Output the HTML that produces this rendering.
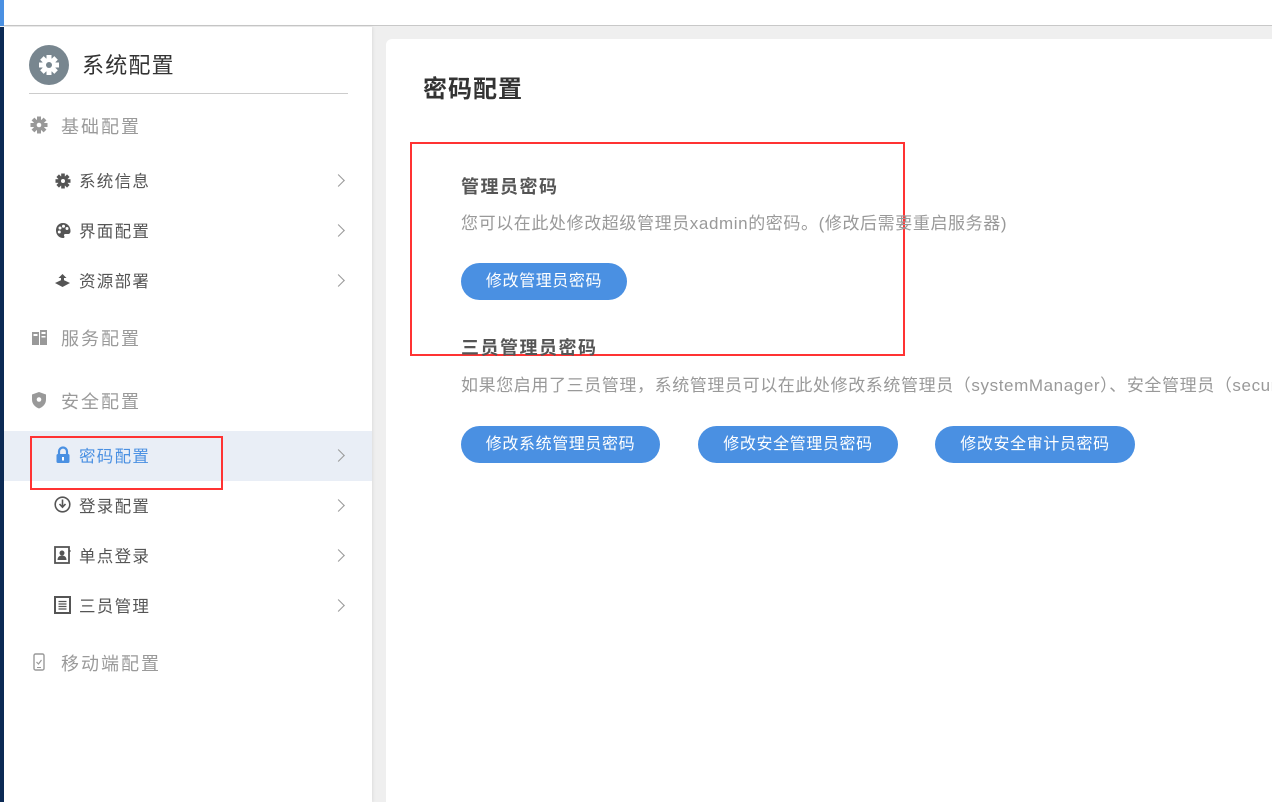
<!DOCTYPE html>
<html><head><meta charset="utf-8"><style>
*{margin:0;padding:0;box-sizing:border-box}
html,body{width:1272px;height:802px;overflow:hidden}
body{background:#efefef;font-family:"Liberation Sans","Noto Sans CJK SC",sans-serif;position:relative}
.a{position:absolute;white-space:nowrap}
.top{left:0;top:0;width:1272px;height:26px;background:#fff;border-bottom:1px solid #c8c8c8}
.strip{left:0;top:27px;width:4px;height:775px;background:#0c2a55}
.side{left:4px;top:27px;width:368px;height:775px;background:#fff;box-shadow:1px 0 3px rgba(0,0,0,.08)}
.main{left:386px;top:39px;width:886px;height:763px;background:#fff;border-radius:6px 0 0 0}
.g{font-size:18px;letter-spacing:2px;color:#9a9a9a;left:61px;line-height:24px}
.s{font-size:16.5px;letter-spacing:1.3px;color:#555;left:79px;line-height:22px}
.chev{left:334px;width:9px;height:9px;border-top:1.3px solid #999;border-right:1.3px solid #999;transform:rotate(45deg)}
.btn{height:37px;border-radius:19px;background:#4a90e2;color:#fff;font-size:16px;letter-spacing:.6px;line-height:37px;text-align:center}
.h{font-size:18px;letter-spacing:1.5px;font-weight:bold;color:#555;left:461px}
.d{font-size:17px;letter-spacing:.6px;color:#999;left:461px}
.red{border:2px solid #f33}
</style></head><body>
<div class="a top"></div>
<div class="a" style="left:0;top:0;width:4px;height:26px;background:#4a90e2"></div>
<div class="a strip"></div>
<div class="a side"></div>
<div class="a main"></div>

<svg class="a" style="left:29px;top:45px" width="40" height="40" viewBox="0 0 40 40"><circle cx="20" cy="20" r="20" fill="#78868f"/><g fill="#fff" transform="translate(20 20)"><circle r="7"/><g><rect x="-2.5" y="-10" width="5" height="20"/><rect x="-2.5" y="-10" width="5" height="20" transform="rotate(45)"/><rect x="-2.5" y="-10" width="5" height="20" transform="rotate(90)"/><rect x="-2.5" y="-10" width="5" height="20" transform="rotate(135)"/></g><circle r="3" fill="#78868f"/></g></svg>
<div class="a" style="left:82px;top:52px;font-size:22px;letter-spacing:1.2px;color:#333;line-height:28px">系统配置</div>
<div class="a" style="left:29px;top:93px;width:319px;height:1px;background:#ccc"></div>

<svg class="a" style="left:30px;top:116px" width="18" height="18" viewBox="-9 -9 18 18"><g fill="#999"><circle r="5.5"/><rect x="-2" y="-8.5" width="4" height="17"/><rect x="-2" y="-8.5" width="4" height="17" transform="rotate(45)"/><rect x="-2" y="-8.5" width="4" height="17" transform="rotate(90)"/><rect x="-2" y="-8.5" width="4" height="17" transform="rotate(135)"/></g><circle r="2.3" fill="#fff"/></svg>
<div class="a g" style="top:115px">基础配置</div>

<svg class="a" style="left:55px;top:173px" width="16" height="16" viewBox="-8 -8 16 16"><g fill="#555"><circle r="5"/><rect x="-1.8" y="-7.5" width="3.6" height="15"/><rect x="-1.8" y="-7.5" width="3.6" height="15" transform="rotate(45)"/><rect x="-1.8" y="-7.5" width="3.6" height="15" transform="rotate(90)"/><rect x="-1.8" y="-7.5" width="3.6" height="15" transform="rotate(135)"/></g><circle r="2" fill="#fff"/></svg>
<div class="a s" style="top:171px">系统信息</div><div class="a chev" style="top:176px"></div>

<svg class="a" style="left:55px;top:222px" width="16" height="17" viewBox="0 0 16 17"><path d="M8 1C3.5 1 1 4.5 1 8.5 1 13 4.5 16 8 16c1.5 0 1.8-1 1.2-2-.6-1 0-2 1.3-2H13c1.5 0 2.5-1 2.5-3C15.5 4.5 12.5 1 8 1z" fill="#555"/><circle cx="5" cy="6" r="1.5" fill="#fff"/><circle cx="8.5" cy="4.3" r="1.5" fill="#fff"/><circle cx="4.3" cy="10" r="1.5" fill="#fff"/><circle cx="12" cy="6.5" r="1.5" fill="#fff"/></svg>
<div class="a s" style="top:221px">界面配置</div><div class="a chev" style="top:226px"></div>

<svg class="a" style="left:54px;top:273px" width="17" height="16" viewBox="0 0 17 16"><path d="M8.5 1 4.5 5h2.5v4h3V5h2.5z" fill="#555"/><path d="M1 10l7.5-3.5L16 10l-7.5 4z" fill="#555"/></svg>
<div class="a s" style="top:271px">资源部署</div><div class="a chev" style="top:276px"></div>

<svg class="a" style="left:31px;top:329px" width="17" height="17" viewBox="0 0 17 17"><rect x="1" y="3" width="7" height="13" fill="#999"/><rect x="9" y="1" width="7" height="15" fill="#999"/><rect x="2.5" y="5" width="4" height="2" fill="#fff"/><rect x="10.5" y="3" width="4" height="2" fill="#fff"/><rect x="10.5" y="7" width="4" height="1.5" fill="#fff"/></svg>
<div class="a g" style="top:327px">服务配置</div>

<svg class="a" style="left:31px;top:391px" width="16" height="18" viewBox="0 0 16 18"><path d="M8 1 1 3.5v5C1 13 4 16 8 17.5c4-1.5 7-4.5 7-9v-5z" fill="#999"/><circle cx="8" cy="8.5" r="2.3" fill="#fff"/></svg>
<div class="a g" style="top:390px">安全配置</div>

<div class="a" style="left:4px;top:431px;width:368px;height:50px;background:#e9eef6"></div>
<svg class="a" style="left:55px;top:446px" width="16" height="18" viewBox="0 0 16 18"><path d="M4 8V5.5a4 4 0 0 1 8 0V8" stroke="#4a90e2" stroke-width="2.2" fill="none"/><rect x="1.5" y="8" width="13" height="9" rx="1.5" fill="#4a90e2"/><rect x="7" y="11" width="2" height="3.5" fill="#fff"/></svg>
<div class="a s" style="top:446px;color:#4a90e2">密码配置</div><div class="a chev" style="top:451px"></div>
<div class="a red" style="left:30px;top:436px;width:193px;height:54px"></div>

<svg class="a" style="left:54px;top:496px" width="17" height="17" viewBox="0 0 17 17"><circle cx="8.5" cy="8.5" r="7.3" stroke="#555" stroke-width="1.6" fill="none"/><path d="M8.5 3.5v7M5.5 8l3 3.2 3-3.2" stroke="#555" stroke-width="1.6" fill="none"/></svg>
<div class="a s" style="top:496px">登录配置</div><div class="a chev" style="top:501px"></div>

<svg class="a" style="left:54px;top:546px" width="17" height="18" viewBox="0 0 17 18"><rect x="1" y="1" width="14" height="16" stroke="#555" stroke-width="1.8" fill="none"/><circle cx="8" cy="7" r="2.5" fill="#555"/><path d="M3.5 14c0-3 2-4.5 4.5-4.5s4.5 1.5 4.5 4.5z" fill="#555"/><rect x="15" y="4" width="1.5" height="2" fill="#555"/></svg>
<div class="a s" style="top:546px">单点登录</div><div class="a chev" style="top:551px"></div>

<svg class="a" style="left:54px;top:596px" width="17" height="18" viewBox="0 0 17 18"><rect x="1" y="1" width="15" height="16" stroke="#555" stroke-width="2" fill="none"/><path d="M4.5 5.5h8M4.5 8h8M4.5 10.5h8M4.5 13h8" stroke="#555" stroke-width="1.2"/></svg>
<div class="a s" style="top:596px">三员管理</div><div class="a chev" style="top:601px"></div>

<svg class="a" style="left:33px;top:653px" width="12" height="18" viewBox="0 0 12 18"><rect x="1" y="1" width="10" height="16" rx="1.5" stroke="#999" stroke-width="1.4" fill="none"/><path d="M3.5 9l2 2 3-4" stroke="#999" stroke-width="1.2" fill="none"/><rect x="4" y="14" width="4" height="1" fill="#999"/></svg>
<div class="a g" style="top:652px">移动端配置</div>

<div class="a" style="left:423px;top:75px;font-size:24px;letter-spacing:1px;font-weight:bold;color:#333;line-height:30px">密码配置</div>
<div class="a red" style="left:410px;top:142px;width:495px;height:214px"></div>
<div class="a h" style="top:173px">管理员密码</div>
<div class="a d" style="top:209px">您可以在此处修改超级管理员xadmin的密码。(修改后需要重启服务器)</div>
<div class="a btn" style="left:461px;top:263px;width:166px">修改管理员密码</div>
<div class="a h" style="top:334px">三员管理员密码</div>
<div class="a d" style="top:371px">如果您启用了三员管理，系统管理员可以在此处修改系统管理员（systemManager）、安全管理员（securityManager）和安全审计员的密码</div>
<div class="a btn" style="left:461px;top:426px;width:199px">修改系统管理员密码</div>
<div class="a btn" style="left:698px;top:426px;width:200px">修改安全管理员密码</div>
<div class="a btn" style="left:935px;top:426px;width:200px">修改安全审计员密码</div>
</body></html>
